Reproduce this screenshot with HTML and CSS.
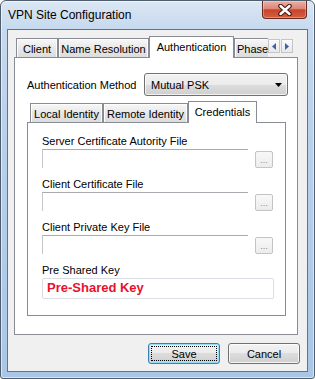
FILE: index.html
```html
<!DOCTYPE html>
<html>
<head>
<meta charset="utf-8">
<link rel="stylesheet" href="styles.css">
</head>
<body>
<div class="window">
  <div class="titlebar">
    <span class="title">VPN Site Configuration</span>
    <div class="close-btn">
      <svg width="14" height="12" viewBox="0 0 14 12">
        <path d="M2.5 2 L11.5 10 M11.5 2 L2.5 10" stroke="#4a1a12" stroke-width="4.6" stroke-linecap="round"/>
        <path d="M2.5 2 L11.5 10 M11.5 2 L2.5 10" stroke="#ffffff" stroke-width="2.4" stroke-linecap="round"/>
      </svg>
    </div>
  </div>
  <div class="client">
    <div class="tabstrip outer">
      <div class="tabs-viewport">
        <div class="tab w-client">Client</div>
        <div class="tab w-nr">Name Resolution</div>
        <div class="tab active w-auth">Authentication</div>
        <div class="tab w-phase">Phase</div>
      </div>
      <div class="scroller">
        <span class="sbtn"><svg width="4" height="7" viewBox="0 0 4 7"><path d="M4 0 L0 3.5 L4 7 Z" fill="#3b62a3"/></svg></span>
        <span class="sbtn"><svg width="4" height="7" viewBox="0 0 4 7"><path d="M0 0 L4 3.5 L0 7 Z" fill="#3b62a3"/></svg></span>
      </div>
    </div>
    <div class="panel outer-panel">
      <div class="method-row">
        <span class="method-label">Authentication Method</span>
        <div class="combo">
          <span>Mutual PSK</span>
          <svg width="7" height="4" viewBox="0 0 7 4"><path d="M0 0 H7 L3.5 4 Z" fill="#000"/></svg>
        </div>
      </div>
      <div class="tabstrip inner">
        <div class="tabs-viewport">
          <div class="tab w-local">Local Identity</div>
          <div class="tab w-remote">Remote Identity</div>
          <div class="tab active w-cred">Credentials</div>
        </div>
      </div>
      <div class="panel inner-panel">
        <div class="field-label">Server Certificate Autority File</div>
        <div class="file-row"><div class="textbox"></div><div class="browse">...</div></div>
        <div class="field-label">Client Certificate File</div>
        <div class="file-row"><div class="textbox"></div><div class="browse">...</div></div>
        <div class="field-label">Client Private Key File</div>
        <div class="file-row"><div class="textbox"></div><div class="browse">...</div></div>
        <div class="field-label">Pre Shared Key</div>
        <div class="psk-box">Pre-Shared Key</div>
      </div>
    </div>
    <div class="button-row">
      <button class="btn btn-default"><span class="focus">Save</span></button>
      <button class="btn">Cancel</button>
    </div>
  </div>
</div>
</body>
</html>
```

FILE: styles.css
```css
body {
  margin: 0;
  background: #ffffff;
  font-family: "Liberation Sans", Arial, sans-serif;
  font-size: 11px;
  color: #000;
}

.window {
  box-sizing: border-box;
  width: 315px;
  height: 379px;
  border: 1px solid #4f5e6e;
  border-radius: 6px 6px 3px 3px;
  background: linear-gradient(#dbe7f4, #c6d9ee 28px, #b8d0ea 140px, #a9c6e7);
  box-shadow: inset 0 0 0 1px rgba(255, 255, 255, 0.55);
  display: flex;
  flex-direction: column;
  overflow: hidden;
}

.titlebar {
  height: 28px;
  flex: none;
  display: flex;
  justify-content: space-between;
  align-items: flex-start;
  padding: 0 7px;
}

.title {
  font-size: 12px;
  line-height: 14px;
  margin-top: 7px;
}

.close-btn {
  width: 45px;
  height: 18px;
  box-sizing: border-box;
  border: 1px solid #6b2a20;
  border-top: none;
  border-radius: 0 0 4px 4px;
  background: linear-gradient(#e9b0a5, #dc8777 45%, #c8442d 52%, #d3603f);
  box-shadow: inset 0 0 0 1px rgba(255, 255, 255, 0.3);
  display: flex;
  align-items: center;
  justify-content: center;
}

.client {
  flex: none;
  box-sizing: border-box;
  margin: 0 6px;
  height: 343px;
  border: 1px solid #61748b;
  background: #f0f0f0;
  display: flex;
  flex-direction: column;
}

.tabstrip {
  display: flex;
  align-items: flex-end;
  height: 22px;
  flex: none;
  background: linear-gradient(#898c95, #898c95) left bottom / 100% 1px no-repeat;
}

.tabstrip.outer {
  margin: 6px 9px 0 6px;
}

.tabstrip.inner {
  margin-top: 5px;
}

.tabs-viewport {
  flex: 1;
  min-width: 0;
  align-self: stretch;
  display: flex;
  align-items: flex-end;
  overflow: hidden;
  padding-left: 2px;
}

.inner .tabs-viewport {
  padding-left: 3px;
}

.tab {
  flex: none;
  box-sizing: border-box;
  height: 19px;
  margin-bottom: 1px;
  border: 1px solid #898c95;
  border-bottom: none;
  background: linear-gradient(#f7f7f7, #e8e8e8 50%, #dcdcdc);
  box-shadow: inset 1px 1px 0 #fdfdfd, inset -1px 0 0 #fdfdfd;
  text-align: center;
  padding-top: 4px;
  line-height: 13px;
  white-space: nowrap;
}

.tab.active {
  height: 22px;
  margin-bottom: 0;
  background: #ffffff;
  box-shadow: none;
}

.w-client { width: 42px; }
.w-nr { width: 91px; }
.w-auth { width: 85px; }
.w-phase { width: 40px; text-align: left; padding-left: 2px; }
.w-local { width: 73px; }
.w-remote { width: 85px; }
.w-cred { width: 69px; }

.scroller {
  flex: none;
  display: flex;
  gap: 1px;
  align-self: flex-start;
  margin: 3px 5px 0 0;
}

.sbtn {
  width: 12px;
  height: 14px;
  box-sizing: border-box;
  border: 1px solid #c5c5c5;
  background: linear-gradient(#fbfbfb, #e8e8e8);
  display: flex;
  align-items: center;
  justify-content: center;
}

.panel {
  background: #ffffff;
  border: 1px solid #898c95;
  border-top: none;
}

.outer-panel {
  flex: none;
  margin: 0 9px 0 6px;
  padding: 15px 11px 18px 12px;
}

.method-row {
  display: flex;
  align-items: center;
  margin-right: -2px;
}

.method-label {
  flex: 1;
}

.combo {
  width: 144px;
  height: 23px;
  box-sizing: border-box;
  border: 1px solid #707070;
  border-radius: 3px;
  background: linear-gradient(#f2f2f2, #ebebeb 50%, #dddddd 50%, #cfcfcf);
  box-shadow: inset 0 0 0 1px rgba(255, 255, 255, 0.7);
  display: flex;
  align-items: center;
  justify-content: space-between;
  padding: 0 5px 0 6px;
}

.inner-panel {
  padding: 12px 0 16px 14px;
}

.field-label {
  line-height: 13px;
}

.file-row {
  display: flex;
  align-items: flex-start;
  margin-top: 1px;
  margin-bottom: 10px;
}

.textbox {
  width: 206px;
  height: 19px;
  box-sizing: border-box;
  border-top: 1px solid #a9abb0;
  border-left: 1px solid #c4c6cc;
  background: #ffffff;
}

.browse {
  width: 18px;
  height: 17px;
  box-sizing: border-box;
  margin: 2px 0 0 7px;
  border: 1px solid #c4c4c4;
  border-radius: 2px;
  background: linear-gradient(#f8f8f8, #ececec);
  color: #8a8a8a;
  font-size: 9px;
  line-height: 17px;
  text-align: center;
}

.psk-box {
  width: 232px;
  height: 21px;
  box-sizing: border-box;
  margin-top: 1px;
  border: 1px solid #dadde3;
  border-radius: 2px;
  color: #e8112d;
  font-weight: bold;
  font-size: 13px;
  line-height: 18px;
  padding-left: 4px;
}

.button-row {
  display: flex;
  justify-content: flex-end;
  align-items: flex-start;
  gap: 8px;
  margin: 8px 7px 0 0;
}

.btn {
  width: 72px;
  height: 21px;
  box-sizing: border-box;
  border: 1px solid #707070;
  border-radius: 3px;
  background: linear-gradient(#f2f2f2, #ebebeb 50%, #dddddd 50%, #cfcfcf);
  box-shadow: inset 0 0 0 1px rgba(255, 255, 255, 0.8);
  font-family: inherit;
  font-size: 11px;
  color: #000;
  padding: 0;
  display: flex;
  align-items: center;
  justify-content: center;
}

.btn-default {
  border-color: #3c7fb1;
  box-shadow: inset 0 0 0 1px #98dcf6;
  padding: 2px;
}

.focus {
  flex: 1;
  align-self: stretch;
  border: 1px dotted #000;
  display: flex;
  align-items: center;
  justify-content: center;
}
```
